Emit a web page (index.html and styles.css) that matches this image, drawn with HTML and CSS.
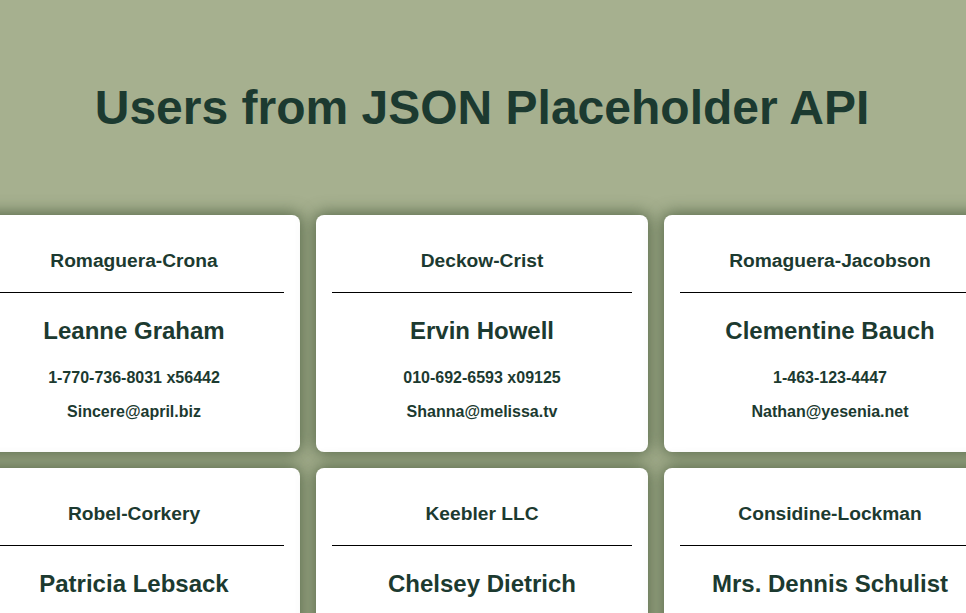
FILE: index.html
```html
<!DOCTYPE html>
<html>
<head>
<meta charset="utf-8">
<link rel="stylesheet" href="styles.css">
</head>
<body>
<header class="header"><h1 class="title">Users from JSON Placeholder API</h1></header>
<main class="grid">
  <div class="card"><div class="company">Romaguera-Crona</div><div class="name">Leanne Graham</div><div class="phone">1-770-736-8031 x56442</div><div class="email">Sincere@april.biz</div></div>
  <div class="card"><div class="company">Deckow-Crist</div><div class="name">Ervin Howell</div><div class="phone">010-692-6593 x09125</div><div class="email">Shanna@melissa.tv</div></div>
  <div class="card"><div class="company">Romaguera-Jacobson</div><div class="name">Clementine Bauch</div><div class="phone">1-463-123-4447</div><div class="email">Nathan@yesenia.net</div></div>
  <div class="card"><div class="company">Robel-Corkery</div><div class="name">Patricia Lebsack</div><div class="phone">493-170-9623 x156</div><div class="email">Julianne.OConner@kory.org</div></div>
  <div class="card"><div class="company">Keebler LLC</div><div class="name">Chelsey Dietrich</div><div class="phone">(254)954-1289</div><div class="email">Lucio_Hettinger@annie.ca</div></div>
  <div class="card"><div class="company">Considine-Lockman</div><div class="name">Mrs. Dennis Schulist</div><div class="phone">1-477-935-8478 x6430</div><div class="email">Karley_Dach@jasper.info</div></div>
</main>
</body>
</html>
```
FILE: styles.css
```css
html, body {
  margin: 0;
  padding: 0;
}
body {
  background: #a6b08f;
  font-family: "Liberation Sans", Arial, sans-serif;
  color: #1c3a30;
  overflow: hidden;
  height: 613px;
}
.header {
  height: 215px;
  display: flex;
  justify-content: center;
}
.title {
  margin: 0 2px 0 0;
  padding-top: 80px;
  font-size: 48px;
  line-height: 56px;
  font-weight: bold;
}
.grid {
  display: grid;
  grid-template-columns: repeat(3, 332px);
  gap: 16px 16px;
  width: 1028px;
  margin-left: -32px;
}
.card {
  background: #fff;
  border-radius: 8px;
  padding: 0 16px 31px;
  box-shadow: 0 0 16px 2px rgba(60, 80, 50, 0.75);
  text-align: center;
  font-weight: bold;
}
.company {
  padding: 35px 0 20px;
  font-size: 19.2px;
  line-height: 22px;
  border-bottom: 1px solid #000;
}
.name {
  margin-top: 24px;
  font-size: 24px;
  line-height: 28px;
}
.phone {
  margin-top: 23px;
  font-size: 16px;
  line-height: 19px;
}
.email {
  margin-top: 15px;
  font-size: 16px;
  line-height: 19px;
}
```
